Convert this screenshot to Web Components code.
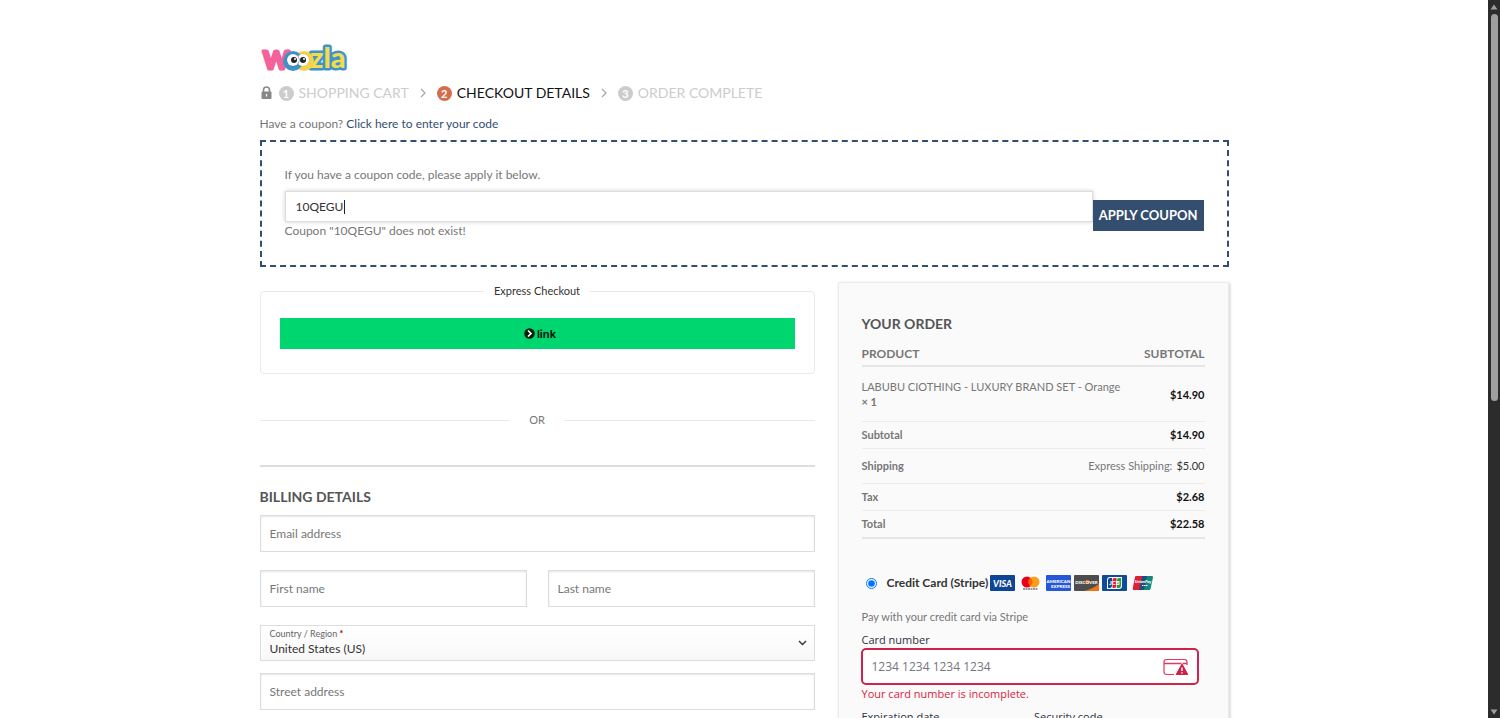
<!DOCTYPE html>
<html lang="en">
<head>
<meta charset="utf-8">
<meta name="viewport" content="width=device-width, initial-scale=1">
<title>Checkout - Woozla</title>
<style>
  :root {
    --color-primary: #344e70;
    --color-accent: #d26e4b;
    --color-text: #777;
    --color-heading: #555;
    --color-strong: #111;
    --color-border: #ddd;
    --color-line: #ececec;
    --color-error: #df1b41;
    --font-card: "Open Sans", "Noto Sans", sans-serif;
  }
  body {
    margin: 0;
    background: #fff;
    color: var(--color-text);
    font: 12px/16px Lato, "Liberation Sans", sans-serif;
  }
</style>
</head>
<body>
<checkout-page>
  <checkout-header slot="header"></checkout-header>
  <coupon-form slot="header" code="10QEGU"></coupon-form>
  <express-checkout slot="main"></express-checkout>
  <billing-form slot="main"></billing-form>
  <order-card slot="aside">
    <order-review></order-review>
    <payment-box></payment-box>
  </order-card>
</checkout-page>

<script>
class CheckoutPage extends HTMLElement {
  constructor() {
    super()
    this.attachShadow({mode: "open"})
    this.shadowRoot.innerHTML = `
      <style>
        :host {
          display: flex;
          height: 100vh;
          overflow: hidden;
        }
        main {
          flex: 1;
          min-width: 0;
          overflow: hidden;
        }
        .container {
          max-width: 969px;
          margin: 0 auto;
          padding-top: 40px;
        }
        .row {
          display: grid;
          grid-template-columns: minmax(0, 555fr) minmax(0, 391fr);
          gap: 23px;
          padding-top: 15px;
        }
      </style>
      <main>
        <div class="container">
          <slot name="header"></slot>
          <div class="row">
            <div><slot name="main"></slot></div>
            <div><slot name="aside"></slot></div>
          </div>
        </div>
      </main>
      <page-scrollbar></page-scrollbar>
    `
  }
}

class PageScrollbar extends HTMLElement {
  constructor() {
    super()
    this.attachShadow({mode: "open"})
    this.shadowRoot.innerHTML = `
      <style>
        :host {
          display: flex;
          flex-direction: column;
          align-items: center;
          width: 12px;
          box-sizing: border-box;
          padding: 4px 0 3px;
          background: #2c2c2c;
        }
        svg {
          display: block;
          width: 8px;
          height: 6px;
          fill: #9f9f9f;
        }
        .track {
          flex: 1;
          padding: 4px 0;
        }
        .thumb {
          width: 7px;
          height: 56%;
          border-radius: 4px;
          background: #9f9f9f;
        }
      </style>
      <svg viewBox="0 0 8 6" aria-hidden="true"><path d="M4 0.5 7.5 5.5h-7z"/></svg>
      <div class="track"><div class="thumb"></div></div>
      <svg viewBox="0 0 8 6" aria-hidden="true"><path d="M4 5.500 7.5 0.5h-7z"/></svg>
    `
  }
}

class CheckoutHeader extends HTMLElement {
  constructor() {
    super()
    this.attachShadow({mode: "open"})
    this.shadowRoot.innerHTML = `
      <style>
        :host {
          display: block;
        }
        .logo {
          display: block;
          width: 96px;
          height: 40px;
        }
        .logo svg, .lock {
          display: block;
        }
        nav {
          display: flex;
          align-items: center;
          gap: 11px;
          margin-top: 3px;
          font-size: 14px;
          line-height: 20px;
          text-transform: uppercase;
        }
        .lock {
          margin: 0 -4px 0 1px;
        }
        a {
          display: flex;
          align-items: center;
          gap: 5px;
          color: #ccc;
          text-decoration: none;
        }
        .number {
          width: 15px;
          height: 15px;
          border-radius: 50%;
          background: #ccc;
          color: #fff;
          font-size: 11px;
          font-weight: 700;
          line-height: 15px;
          text-align: center;
        }
        a.current {
          color: var(--color-strong);
        }
        a.current .number {
          background: var(--color-accent);
        }
      </style>
      <a class="logo" href="#" aria-label="Woozla">
        <svg width="96" height="40" viewBox="0 0 96 40" font-family="Lato, sans-serif" font-weight="900" stroke-linejoin="round" paint-order="stroke">
          <text x="3" y="29" font-size="25" fill="#f4629b" stroke="#f4629b" stroke-width="3">W</text>
          <text x="50" y="28" font-size="29" fill="#f3dc4b" stroke="#3f93cd" stroke-width="5">zla</text>
          <circle cx="44" cy="21" r="10" fill="#f3d34e"/>
          <circle cx="33" cy="21" r="10" fill="#3f93cd"/>
          <circle cx="43" cy="20" r="6" fill="#fff" stroke="#d8b63c"/>
          <circle cx="33" cy="20" r="6" fill="#fff" stroke="#2c6fa8"/>
          <circle cx="34" cy="20" r="3" fill="#20272c"/>
          <circle cx="43" cy="20" r="3" fill="#20272c"/>
          <circle cx="35" cy="19" r="1" fill="#fff"/>
          <circle cx="44" cy="19" r="1" fill="#fff"/>
        </svg>
      </a>
      <nav aria-label="Checkout steps">
        <svg class="lock" width="11" height="14" viewBox="0 0 11 14" aria-hidden="true">
          <path d="M2.500 6V4a3 3 0 0 1 6 0v2" fill="none" stroke="#888" stroke-width="1.600"/>
          <rect x="0.500" y="5.500" width="10" height="7.500" rx="1" fill="#888"/>
          <path d="M5.500 8v2.500" stroke="#fff" stroke-width="1.200"/>
        </svg>
        <a href="#"><span class="number">1</span>Shopping Cart</a>
        <svg width="6" height="10" viewBox="0 0 6 10" aria-hidden="true"><path d="M1 1l4 4-4 4" fill="none" stroke="#aaa" stroke-width="1.300"/></svg>
        <a class="current" href="#"><span class="number">2</span>Checkout details</a>
        <svg width="6" height="10" viewBox="0 0 6 10" aria-hidden="true"><path d="M1 1l4 4-4 4" fill="none" stroke="#aaa" stroke-width="1.300"/></svg>
        <a href="#"><span class="number">3</span>Order Complete</a>
      </nav>
    `
  }
}

class CouponForm extends HTMLElement {
  constructor() {
    super()
    this.attachShadow({mode: "open"})
    const code = this.getAttribute("code")
    this.shadowRoot.innerHTML = `
      <style>
        :host {
          display: block;
          padding-top: 13px;
        }
        p {
          margin: 0;
        }
        a {
          color: var(--color-primary);
          text-decoration: none;
        }
        form {
          margin-top: 8px;
          padding: 25px 23px 26px;
          border: 2px dashed var(--color-primary);
        }
        .fields {
          display: flex;
          align-items: flex-end;
          margin-top: 8px;
        }
        .code {
          flex: 1;
        }
        input {
          display: block;
          box-sizing: border-box;
          width: 100%;
          height: 31px;
          padding: 0 10px;
          border: 1px solid #ddd;
          outline: 0;
          box-shadow: 0 0 4px #ccc;
          /* caret after the typed code */
          background: linear-gradient(#222, #222) 58px 8px / 1px 14px no-repeat #fff;
          color: #333;
          font: inherit;
        }
        .code p {
          padding-top: 1px;
        }
        button {
          height: 31px;
          margin-bottom: 8px;
          padding: 0 6px;
          border: 0;
          background: var(--color-primary);
          color: #fff;
          font: 700 13px/31px Lato, sans-serif;
          text-transform: uppercase;
        }
      </style>
      <p>Have a coupon? <a href="#">Click here to enter your code</a></p>
      <form>
        <p><label for="code">If you have a coupon code, please apply it below.</label></p>
        <div class="fields">
          <div class="code">
            <input id="code" type="text" value="${code}">
            <p>Coupon "${code}" does not exist!</p>
          </div>
          <button type="button">Apply coupon</button>
        </div>
      </form>
    `
  }
}

class ExpressCheckout extends HTMLElement {
  constructor() {
    super()
    this.attachShadow({mode: "open"})
    this.shadowRoot.innerHTML = `
      <style>
        :host {
          display: block;
        }
        fieldset {
          margin: 0;
          padding: 18px 19px 24px;
          border: 1px solid #e9e9e9;
          border-radius: 4px;
        }
        legend {
          margin: 0 auto;
          padding: 0 10px;
          color: #333;
          font-size: 11px;
          line-height: 18px;
        }
        button {
          display: flex;
          align-items: center;
          justify-content: center;
          gap: 2px;
          width: 100%;
          height: 31px;
          padding: 0 0 0 6px;
          border: 0;
          background: #00d66f;
          color: #011e0f;
          font: 700 11px/16px Inter, sans-serif;
        }
        .or {
          display: flex;
          align-items: center;
          gap: 19px;
          margin: 38px 0 37px;
          font-size: 11px;
        }
        .or::before, .or::after {
          content: "";
          flex: 1;
          height: 1px;
          background: #e9e9e9;
        }
      </style>
      <fieldset>
        <legend>Express Checkout</legend>
        <button type="button">
          <svg width="11" height="11" viewBox="0 0 11 11" aria-hidden="true">
            <circle cx="5.500" cy="5.500" r="5.300" fill="#011e0f"/>
            <path d="M4 2.500 7 5.500 4 8.500" fill="none" stroke="#fff" stroke-width="1.700"/>
          </svg>
          link
        </button>
      </fieldset>
      <div class="or">OR</div>
    `
  }
}

class TextField extends HTMLElement {
  constructor() {
    super()
    this.attachShadow({mode: "open"})
    const label = this.getAttribute("label")
    this.shadowRoot.innerHTML = `
      <style>
        :host {
          display: block;
        }
        input {
          display: block;
          box-sizing: border-box;
          width: 100%;
          height: 37px;
          padding: 0 9px 1px;
          border: 1px solid var(--color-border);
          border-radius: 0;
          background: #fff;
          box-shadow: inset 0 1px 2px rgba(0, 0, 0, 0.1);
          color: #333;
          font: inherit;
        }
        input::placeholder {
          color: #777;
          opacity: 1;
        }
      </style>
      <input type="${this.getAttribute("type") || "text"}" placeholder="${label}" aria-label="${label}">
    `
  }
}

class BillingForm extends HTMLElement {
  constructor() {
    super()
    this.attachShadow({mode: "open"})
    this.shadowRoot.innerHTML = `
      <style>
        :host {
          display: block;
          border-top: 2px solid var(--color-border);
          padding-top: 20px;
        }
        h3 {
          margin: 0 0 8px;
          color: var(--color-heading);
          font-size: 14px;
          line-height: 20px;
          text-transform: uppercase;
        }
        form {
          display: grid;
          gap: 18px;
        }
        .names {
          display: grid;
          grid-template-columns: 1fr 1fr;
          gap: 21px;
        }
        .country {
          display: grid;
          margin-bottom: -6px;
        }
        .country > * {
          grid-area: 1 / 1;
        }
        label {
          z-index: 1;
          justify-self: start;
          align-self: start;
          padding: 2px 0 0 10px;
          color: #666;
          font-size: 9px;
          line-height: 14px;
        }
        abbr {
          color: #b20000;
          font-weight: 700;
        }
        select {
          appearance: none;
          width: 100%;
          height: 36px;
          padding: 12px 9px 0;
          border: 1px solid var(--color-border);
          border-radius: 0;
          background: linear-gradient(#fff, #f8f8f8);
          color: #333;
          font: inherit;
        }
        svg {
          justify-self: end;
          align-self: center;
          margin-right: 8px;
          pointer-events: none;
        }
      </style>
      <h3>Billing details</h3>
      <form>
        <text-field label="Email address" type="email"></text-field>
        <div class="names">
          <text-field label="First name"></text-field>
          <text-field label="Last name"></text-field>
        </div>
        <div class="country">
          <select id="country"><option>United States (US)</option></select>
          <label for="country">Country / Region <abbr>*</abbr></label>
          <svg width="9" height="6" viewBox="0 0 9 6" aria-hidden="true"><path d="M1 1l3.500 3.500L8 1" fill="none" stroke="#333" stroke-width="1.400"/></svg>
        </div>
        <text-field label="Street address"></text-field>
      </form>
    `
  }
}

class OrderCard extends HTMLElement {
  constructor() {
    super()
    this.attachShadow({mode: "open"})
    this.shadowRoot.innerHTML = `
      <style>
        :host {
          display: block;
          box-sizing: border-box;
          padding: 31px 23px;
          border: 1px solid #ececec;
          background: #fafafa;
          box-shadow: 1px 1px 3px rgba(0, 0, 0, 0.2);
        }
      </style>
      <slot></slot>
    `
  }
}

class OrderReview extends HTMLElement {
  constructor() {
    super()
    this.attachShadow({mode: "open"})
    this.shadowRoot.innerHTML = `
      <style>
        :host {
          display: block;
        }
        h3 {
          margin: 0 0 8px;
          color: var(--color-heading);
          font-size: 14px;
          line-height: 20px;
          text-transform: uppercase;
        }
        table {
          width: 100%;
          border-collapse: collapse;
          font-size: 11px;
          line-height: 15px;
        }
        th, td {
          padding: 5px 0 6px;
          border-bottom: 1px solid var(--color-line);
          text-align: left;
        }
        th + th, th + td, td + td {
          width: 76px;
          text-align: right;
        }
        thead th {
          padding: 4px 0;
          border-bottom: 2px solid #e6e6e6;
          font-size: 12px;
          text-transform: uppercase;
        }
        .item td {
          padding: 12px 0;
        }
        td strong {
          color: var(--color-strong);
        }
        .shipping td {
          padding: 9px 0 10px;
        }
        .shipping div {
          display: flex;
          gap: 4px;
        }
        .shipping b {
          flex: 1;
        }
        .shipping span {
          color: #333;
        }
        .total > * {
          border-bottom: 2px solid #e6e6e6;
        }
      </style>
      <h3>Your order</h3>
      <table>
        <thead>
          <tr><th>Product</th><th>Subtotal</th></tr>
        </thead>
        <tbody>
          <tr class="item"><td>LABUBU CIOTHING - LUXURY BRAND SET - Orange <b>×&nbsp;1</b></td><td><strong>$14.90</strong></td></tr>
        </tbody>
        <tfoot>
          <tr><th>Subtotal</th><td><strong>$14.90</strong></td></tr>
          <tr class="shipping"><td colspan="2"><div><b>Shipping</b>Express Shipping: <span>$5.00</span></div></td></tr>
          <tr><th>Tax</th><td><strong>$2.68</strong></td></tr>
          <tr class="total"><th>Total</th><td><strong>$22.58</strong></td></tr>
        </tfoot>
      </table>
    `
  }
}

class CardBrands extends HTMLElement {
  constructor() {
    super()
    this.attachShadow({mode: "open"})
    this.shadowRoot.innerHTML = `
      <style>
        :host {
          display: flex;
          gap: 3px;
        }
        svg {
          display: block;
          width: 25px;
          height: 16px;
        }
        text {
          font-family: Lato, sans-serif;
          font-weight: 900;
          text-anchor: middle;
          fill: #fff;
        }
      </style>
      <svg viewBox="0 0 25 16" role="img" aria-label="Visa">
        <rect width="25" height="16" rx="1" fill="#0e4595"/>
        <text x="12.500" y="11.500" font-size="9" font-style="italic">VISA</text>
      </svg>
      <svg viewBox="0 0 25 16" role="img" aria-label="Mastercard">
        <rect width="25" height="16" rx="1" fill="#fff"/>
        <circle cx="9" cy="7" r="5.500" fill="#eb001b"/>
        <circle cx="16" cy="7" r="5.500" fill="#f79e1b"/>
        <path d="M12.500 2.700a5.500 5.500 0 0 1 0 8.600 5.500 5.500 0 0 1 0-8.600z" fill="#ff5f00"/>
        <path d="M5 14h15" stroke="#333" stroke-dasharray="2 .5"/>
      </svg>
      <svg viewBox="0 0 25 16" role="img" aria-label="American Express">
        <rect width="25" height="16" rx="1" fill="#2557d6"/>
        <text x="12.500" y="7.500" font-size="4.500">AMERICAN</text>
        <text x="14.500" y="12.500" font-size="4.500">EXPRESS</text>
      </svg>
      <svg viewBox="0 0 25 16" role="img" aria-label="Discover">
        <rect width="25" height="16" rx="1" fill="#4d4d4d"/>
        <path d="M25 9v6q0 1-1 1H10Q19 14 25 9z" fill="#f47216"/>
        <circle cx="13.500" cy="6.800" r="2" fill="#f47216"/>
        <text x="12.500" y="8.500" font-size="4.500">DISCOVER</text>
      </svg>
      <svg viewBox="0 0 25 16" role="img" aria-label="JCB">
        <rect width="25" height="16" rx="1" fill="#0e4c96"/>
        <path d="M8 2h12v9q0 3-3 3H5V5q0-3 3-3z" fill="#fff"/>
        <path d="M8 3h2v7q0 3-2 3H6V5q0-2 2-2z" fill="#0e4c96"/>
        <path d="M12.500 3h2v7q0 3-2 3h-2V5q0-2 2-2z" fill="#e01f3d"/>
        <path d="M17 3h2v7q0 3-2 3h-2V5q0-2 2-2z" fill="#259b3e"/>
        <text x="12.500" y="10" font-size="6">JCB</text>
      </svg>
      <svg viewBox="0 0 25 16" role="img" aria-label="UnionPay">
        <path d="M6 1h7l-3 14H3.500q-1.200 0-.8-1.500L5 2q.2-1 1-1z" fill="#dd2033"/>
        <path d="M12 1h6l-3 14H9z" fill="#254a7c"/>
        <path d="M17 1h5q1.300 0 1 1.500L20.500 14q-.2 1-1.500 1h-5z" fill="#118780"/>
        <text x="13" y="8" font-size="4" font-style="italic">UnionPay</text>
        <path d="M12 10.500h6" stroke="#fff" stroke-dasharray="1.500 .5"/>
      </svg>
    `
  }
}

class PaymentBox extends HTMLElement {
  constructor() {
    super()
    this.attachShadow({mode: "open"})
    this.shadowRoot.innerHTML = `
      <style>
        :host {
          display: block;
          padding-top: 36px;
        }
        .method {
          display: flex;
          align-items: center;
        }
        .method label {
          margin: 0 2px 0 10px;
          color: #333;
          font-weight: 700;
        }
        input[type="radio"] {
          width: 11px;
          height: 11px;
          margin: 0 0 0 4px;
          accent-color: #0075ff;
        }
        p {
          margin: 0;
        }
        .hint {
          padding-top: 18px;
          font-size: 11px;
        }
        .card {
          padding: 7px 6px 0 0;
          color: #30313d;
          font: 11px/16px var(--font-card);
        }
        .card label {
          display: block;
        }
        .number {
          display: flex;
          align-items: center;
          box-sizing: border-box;
          height: 37px;
          margin: 0 0 1px -1px;
          padding: 0 8px 0 9px;
          border: 2px solid #d0224a;
          border-radius: 5px;
          background: #fff;
        }
        .number input {
          flex: 1;
          min-width: 0;
          padding: 0;
          border: 0;
          outline: 0;
          background: none;
          font: 12px/16px var(--font-card);
        }
        .number input::placeholder {
          color: #757680;
          opacity: 1;
        }
        .error {
          color: var(--color-error);
        }
        .columns {
          display: grid;
          grid-template-columns: 1fr 1fr;
          gap: 8px;
          margin-top: 7px;
        }
        .columns input {
          box-sizing: border-box;
          width: 100%;
          height: 37px;
        }
      </style>
      <div class="method">
        <input type="radio" id="stripe" name="payment" checked>
        <label for="stripe">Credit Card (Stripe)</label>
        <card-brands></card-brands>
      </div>
      <p class="hint">Pay with your credit card via Stripe</p>
      <div class="card">
        <label for="number">Card number</label>
        <div class="number">
          <input id="number" type="text" placeholder="1234 1234 1234 1234">
          <svg width="26" height="18" viewBox="0 0 26 18" aria-hidden="true">
            <path d="M11 16.500H3.500q-2.500 0-2.500-2.500V4q0-2.500 2.500-2.500h18Q24 1.500 24 4v3" fill="none" stroke="#df3b5c" stroke-width="1.200"/>
            <path d="M1 5.500h23" stroke="#df3b5c" stroke-width="1.500"/>
            <path d="M19 4.500 26 17.500H12z" fill="#fff"/>
            <path d="M19 6 24.800 16.500H13.200z" fill="#cf1f45" stroke="#cf1f45" stroke-width="1" stroke-linejoin="round"/>
            <path d="M19 9.500v3.500M19 14.200v1.300" stroke="#fff" stroke-width="1.500"/>
          </svg>
        </div>
        <p class="error">Your card number is incomplete.</p>
        <div class="columns">
          <div>
            <label for="expiry">Expiration date</label>
            <input id="expiry" type="text">
          </div>
          <div>
            <label for="cvc">Security code</label>
            <input id="cvc" type="text">
          </div>
        </div>
      </div>
    `
  }
}

customElements.define("page-scrollbar", PageScrollbar)
customElements.define("checkout-page", CheckoutPage)
customElements.define("checkout-header", CheckoutHeader)
customElements.define("coupon-form", CouponForm)
customElements.define("express-checkout", ExpressCheckout)
customElements.define("text-field", TextField)
customElements.define("billing-form", BillingForm)
customElements.define("order-card", OrderCard)
customElements.define("order-review", OrderReview)
customElements.define("card-brands", CardBrands)
customElements.define("payment-box", PaymentBox)
</script>
</body>
</html>
